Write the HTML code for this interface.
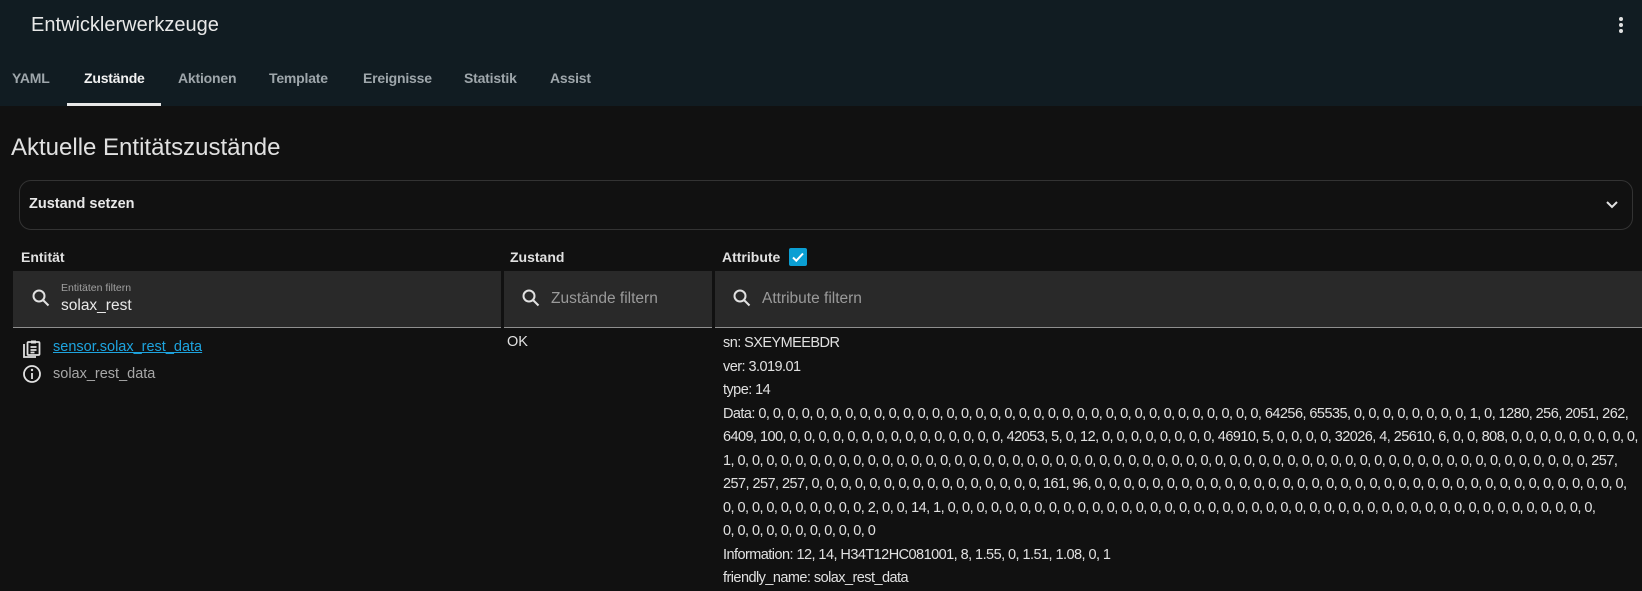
<!DOCTYPE html>
<html><head><meta charset="utf-8"><style>
*{box-sizing:border-box;margin:0;padding:0}
body{width:1642px;height:587px;overflow:hidden;background:#111111;font-family:"Liberation Sans",sans-serif;color:#e1e1e1;position:relative}
.a{position:absolute;white-space:nowrap}
.hdr{position:absolute;left:0;top:0;width:1642px;height:106px;background:#111c22}
.tab{position:absolute;top:70px;font-size:14px;font-weight:bold;color:#9ea6ab;letter-spacing:-0.2px}
.box{position:absolute;top:271px;height:57px;background:#292929;border-bottom:1px solid #8f8f8f}
.ph{position:absolute;top:290px;font-size:15.5px;color:#9a9a9a}
.at{position:absolute;left:723px;top:332px;font-size:14.5px;letter-spacing:-0.55px;line-height:23.5px;white-space:nowrap;color:#e1e1e1}
</style></head><body>
<div class="hdr"></div>
<div class="a" style="left:31px;top:14px;font-size:20px;color:#e8e8e8">Entwicklerwerkzeuge</div>
<svg class="a" style="left:1613px;top:15px" width="16" height="20" viewBox="0 0 16 20"><circle cx="8" cy="4" r="2" fill="#e1e1e1"/><circle cx="8" cy="10" r="2" fill="#e1e1e1"/><circle cx="8" cy="16" r="2" fill="#e1e1e1"/></svg>
<div class="tab" style="left:12px">YAML</div>
<div class="tab" style="left:84px;color:#f2f2f2">Zustände</div>
<div class="a" style="left:67px;top:103px;width:94px;height:3px;background:#e8e8e8"></div>
<div class="tab" style="left:178px">Aktionen</div>
<div class="tab" style="left:269px">Template</div>
<div class="tab" style="left:363px">Ereignisse</div>
<div class="tab" style="left:464px">Statistik</div>
<div class="tab" style="left:550px">Assist</div>

<div class="a" style="left:11px;top:134px;font-size:24px;color:#e1e1e1">Aktuelle Entitätszustände</div>
<div class="a" style="left:19px;top:180px;width:1614px;height:50px;border:1px solid #333;border-radius:12px"></div>
<div class="a" style="left:29px;top:196px;font-size:14.5px;font-weight:bold;color:#e8e8e8">Zustand setzen</div>
<svg class="a" style="left:1604px;top:196px" width="16" height="16" viewBox="0 0 16 16"><path d="M3 6l5 5 5-5" stroke="#e1e1e1" stroke-width="2" fill="none"/></svg>

<div class="a" style="left:21px;top:249px;font-size:14px;font-weight:bold">Entität</div>
<div class="a" style="left:510px;top:249px;font-size:14px;font-weight:bold">Zustand</div>
<div class="a" style="left:722px;top:249px;font-size:14px;font-weight:bold">Attribute</div>
<div class="a" style="left:789px;top:248px;width:18px;height:18px;background:#0b9fd3;border-radius:2px"></div>
<svg class="a" style="left:789px;top:248px" width="18" height="18" viewBox="0 0 18 18"><path d="M4 9.5l3.3 3.2L14 5.5" stroke="#fff" stroke-width="2" fill="none"/></svg>

<div class="box" style="left:13px;width:488px"></div>
<div class="box" style="left:504px;width:208px"></div>
<div class="box" style="left:715px;width:927px"></div>
<svg class="a" style="left:31px;top:288px" width="20" height="20" viewBox="0 0 20 20"><circle cx="8" cy="8" r="5.5" stroke="#e1e1e1" stroke-width="2" fill="none"/><path d="M12 12l5.5 5.5" stroke="#e1e1e1" stroke-width="2"/></svg>
<div class="a" style="left:61px;top:282px;font-size:10.5px;color:#a0a0a0">Entitäten filtern</div>
<div class="a" style="left:61px;top:297px;font-size:15.5px;color:#e8e8e8">solax_rest</div>
<svg class="a" style="left:521px;top:288px" width="20" height="20" viewBox="0 0 20 20"><circle cx="8" cy="8" r="5.5" stroke="#e1e1e1" stroke-width="2" fill="none"/><path d="M12 12l5.5 5.5" stroke="#e1e1e1" stroke-width="2"/></svg>
<div class="ph" style="left:551px">Zustände filtern</div>
<svg class="a" style="left:732px;top:288px" width="20" height="20" viewBox="0 0 20 20"><circle cx="8" cy="8" r="5.5" stroke="#e1e1e1" stroke-width="2" fill="none"/><path d="M12 12l5.5 5.5" stroke="#e1e1e1" stroke-width="2"/></svg>
<div class="ph" style="left:762px">Attribute filtern</div>

<svg class="a" style="left:22px;top:339px" width="20" height="20" viewBox="0 0 20 20" fill="none" stroke="#e1e1e1" stroke-width="1.8"><path d="M2 5v13h12"/><rect x="5.5" y="3" width="12" height="13" rx="1"/><rect x="9" y="1.5" width="5" height="3" fill="#e1e1e1" stroke="none"/><path d="M8.5 8h6M8.5 11h6M8.5 13.5h4"/></svg>
<div class="a" style="left:53px;top:339px;font-size:14.5px;color:#1ea4df;text-decoration:underline">sensor.solax_rest_data</div>
<svg class="a" style="left:22px;top:364px" width="20" height="20" viewBox="0 0 20 20"><circle cx="10" cy="10" r="8" stroke="#e1e1e1" stroke-width="1.8" fill="none"/><circle cx="10" cy="6" r="1.2" fill="#e1e1e1"/><path d="M10 9v6" stroke="#e1e1e1" stroke-width="1.8"/></svg>
<div class="a" style="left:53px;top:366px;font-size:14.5px;color:#a8a8a8">solax_rest_data</div>
<div class="a" style="left:507px;top:334px;font-size:14.5px">OK</div>

<div class="at">sn: SXEYMEEBDR<br>ver: 3.019.01<br>type: 14<br>Data: 0, 0, 0, 0, 0, 0, 0, 0, 0, 0, 0, 0, 0, 0, 0, 0, 0, 0, 0, 0, 0, 0, 0, 0, 0, 0, 0, 0, 0, 0, 0, 0, 0, 0, 0, 64256, 65535, 0, 0, 0, 0, 0, 0, 0, 0, 1, 0, 1280, 256, 2051, 262,<br>6409, 100, 0, 0, 0, 0, 0, 0, 0, 0, 0, 0, 0, 0, 0, 0, 0, 42053, 5, 0, 12, 0, 0, 0, 0, 0, 0, 0, 0, 46910, 5, 0, 0, 0, 0, 32026, 4, 25610, 6, 0, 0, 808, 0, 0, 0, 0, 0, 0, 0, 0, 0,<br>1, 0, 0, 0, 0, 0, 0, 0, 0, 0, 0, 0, 0, 0, 0, 0, 0, 0, 0, 0, 0, 0, 0, 0, 0, 0, 0, 0, 0, 0, 0, 0, 0, 0, 0, 0, 0, 0, 0, 0, 0, 0, 0, 0, 0, 0, 0, 0, 0, 0, 0, 0, 0, 0, 0, 0, 0, 0, 0, 0, 257,<br>257, 257, 257, 0, 0, 0, 0, 0, 0, 0, 0, 0, 0, 0, 0, 0, 0, 0, 0, 161, 96, 0, 0, 0, 0, 0, 0, 0, 0, 0, 0, 0, 0, 0, 0, 0, 0, 0, 0, 0, 0, 0, 0, 0, 0, 0, 0, 0, 0, 0, 0, 0, 0, 0, 0, 0, 0, 0,<br>0, 0, 0, 0, 0, 0, 0, 0, 0, 0, 2, 0, 0, 14, 1, 0, 0, 0, 0, 0, 0, 0, 0, 0, 0, 0, 0, 0, 0, 0, 0, 0, 0, 0, 0, 0, 0, 0, 0, 0, 0, 0, 0, 0, 0, 0, 0, 0, 0, 0, 0, 0, 0, 0, 0, 0, 0, 0, 0, 0,<br>0, 0, 0, 0, 0, 0, 0, 0, 0, 0, 0<br>Information: 12, 14, H34T12HC081001, 8, 1.55, 0, 1.51, 1.08, 0, 1<br>friendly_name: solax_rest_data</div>
</body></html>
